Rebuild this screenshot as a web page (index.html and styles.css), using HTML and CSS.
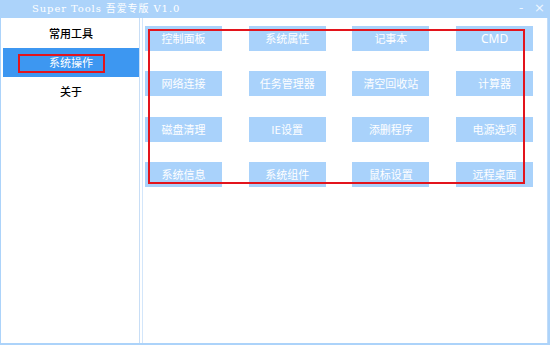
FILE: index.html
```html
<!DOCTYPE html>
<html>
<head>
<meta charset="utf-8">
<link rel="stylesheet" href="styles.css">
</head>
<body>
<div class="window">
  <div class="titlebar">
    <span class="title">Super Tools 吾爱专版 V1.0</span>
    <span class="ctrl min">-</span>
    <span class="ctrl close">×</span>
  </div>
  <div class="body">
    <div class="sidebar">
      <div class="nav-item">常用工具</div>
      <div class="nav-item active"><span class="mark"></span>系统操作</div>
      <div class="nav-item">关于</div>
    </div>
    <div class="divider"></div>
    <div class="main">
      <div class="grid">
        <div class="btn">控制面板</div>
        <div class="btn">系统属性</div>
        <div class="btn">记事本</div>
        <div class="btn latin">CMD</div>
        <div class="btn">网络连接</div>
        <div class="btn">任务管理器</div>
        <div class="btn">清空回收站</div>
        <div class="btn">计算器</div>
        <div class="btn">磁盘清理</div>
        <div class="btn">IE设置</div>
        <div class="btn">添删程序</div>
        <div class="btn">电源选项</div>
        <div class="btn">系统信息</div>
        <div class="btn">系统组件</div>
        <div class="btn">鼠标设置</div>
        <div class="btn">远程桌面</div>
      </div>
      <div class="highlight"></div>
    </div>
  </div>
</div>
</body>
</html>
```
FILE: styles.css
```css
* { box-sizing: border-box; }
html, body { margin: 0; padding: 0; }
body {
  width: 550px;
  height: 345px;
  font-family: "Noto Sans CJK SC", "Noto Sans", sans-serif;
  background: #fff;
}
.window {
  width: 550px;
  height: 345px;
  background: #acd3fa;
  display: flex;
  flex-direction: column;
}
.titlebar {
  height: 18px;
  position: relative;
  display: flex;
  align-items: center;
  padding-left: 32px;
  color: #fff;
}
.title {
  font-family: "DejaVu Serif", "Noto Sans CJK SC", serif;
  font-size: 10px;
  letter-spacing: 0.9px;
  line-height: 18px;
}
.ctrl {
  position: absolute;
  top: 0;
  font-family: "DejaVu Sans", sans-serif;
  color: #eef6ff;
  line-height: 18px;
  font-size: 12px;
}
.ctrl.min { left: 519px; top: -1px; }
.ctrl.close { left: 534px; top: -1px; font-size: 13px; }
.body {
  flex: 1;
  display: flex;
  padding: 0 2px 2px 1px;
}
.sidebar {
  width: 138px;
  background: #fff;
  padding: 1px 0 0 2px;
}
.nav-item {
  position: relative;
  height: 29px;
  line-height: 29px;
  text-align: center;
  font-size: 11px;
  color: #000;
  font-weight: 500;
}
.nav-item.active {
  background: #3d97f1;
  color: #fff;
  font-weight: 400;
}
.mark {
  position: absolute;
  left: 15px;
  top: 6px;
  width: 87px;
  height: 19px;
  border: 2px solid #e3141c;
}
.divider {
  width: 3px;
  background: #fff;
  border-left: 1px solid #c8def6;
}
.main {
  flex: 1;
  position: relative;
  background: #fff;
  border-left: 1px solid #d3e6fa;
  border-right: 1px solid #c2dcf8;
  padding: 8px 0 0 2px;
}
.grid {
  display: grid;
  grid-template-columns: repeat(4, 77px);
  grid-auto-rows: 25px;
  column-gap: 26.7px;
  row-gap: 20.3px;
}
.btn {
  background: #a9d2fb;
  color: #fff;
  font-size: 11px;
  line-height: 25px;
  text-align: center;
}
.btn.latin {
  font-family: "Noto Sans", sans-serif;
  font-size: 12px;
}
.highlight {
  position: absolute;
  left: 5px;
  top: 11px;
  width: 377px;
  height: 155px;
  border: 2px solid #e3141c;
}
```
